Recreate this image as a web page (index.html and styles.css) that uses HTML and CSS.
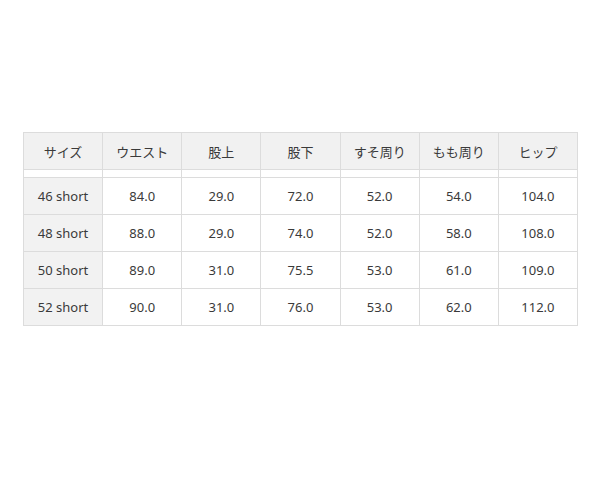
FILE: index.html
```html
<!DOCTYPE html>
<html lang="ja">
<head>
<meta charset="utf-8">
<link rel="stylesheet" href="styles.css">
</head>
<body>
<div class="wrap">
<table class="size">
<thead>
<tr><th>サイズ</th><th>ウエスト</th><th>股上</th><th>股下</th><th>すそ周り</th><th>もも周り</th><th>ヒップ</th></tr>
</thead>
<tbody>
<tr class="gap"><td></td><td></td><td></td><td></td><td></td><td></td><td></td></tr>
<tr><th>46 short</th><td>84.0</td><td>29.0</td><td>72.0</td><td>52.0</td><td>54.0</td><td>104.0</td></tr>
<tr><th>48 short</th><td>88.0</td><td>29.0</td><td>74.0</td><td>52.0</td><td>58.0</td><td>108.0</td></tr>
<tr><th>50 short</th><td>89.0</td><td>31.0</td><td>75.5</td><td>53.0</td><td>61.0</td><td>109.0</td></tr>
<tr><th>52 short</th><td>90.0</td><td>31.0</td><td>76.0</td><td>53.0</td><td>62.0</td><td>112.0</td></tr>
</tbody>
</table>
</div>
</body>
</html>
```
FILE: styles.css
```css
html, body {
  margin: 0;
  padding: 0;
  background: #fff;
}
.wrap {
  padding: 132px 23px 0 23px;
}
.size {
  border-collapse: separate;
  border-spacing: 0;
  table-layout: fixed;
  width: 555px;
  border-top: 1px solid #dcdcdc;
  border-left: 1px solid #dcdcdc;
  font-family: "Noto Sans", "Noto Sans CJK JP", sans-serif;
  font-size: 13px;
  color: #3a3a3a;
}
.size th, .size td {
  height: 36px;
  padding: 0;
  border-right: 1px solid #dcdcdc;
  border-bottom: 1px solid #dcdcdc;
  text-align: center;
  vertical-align: middle;
  font-weight: normal;
  box-sizing: content-box;
}
.size thead th {
  background: #f1f1f1;
}
.size tbody th {
  background: #f2f2f2;
}
.size tr.gap td {
  height: 7px;
  background: #fff;
}
```
